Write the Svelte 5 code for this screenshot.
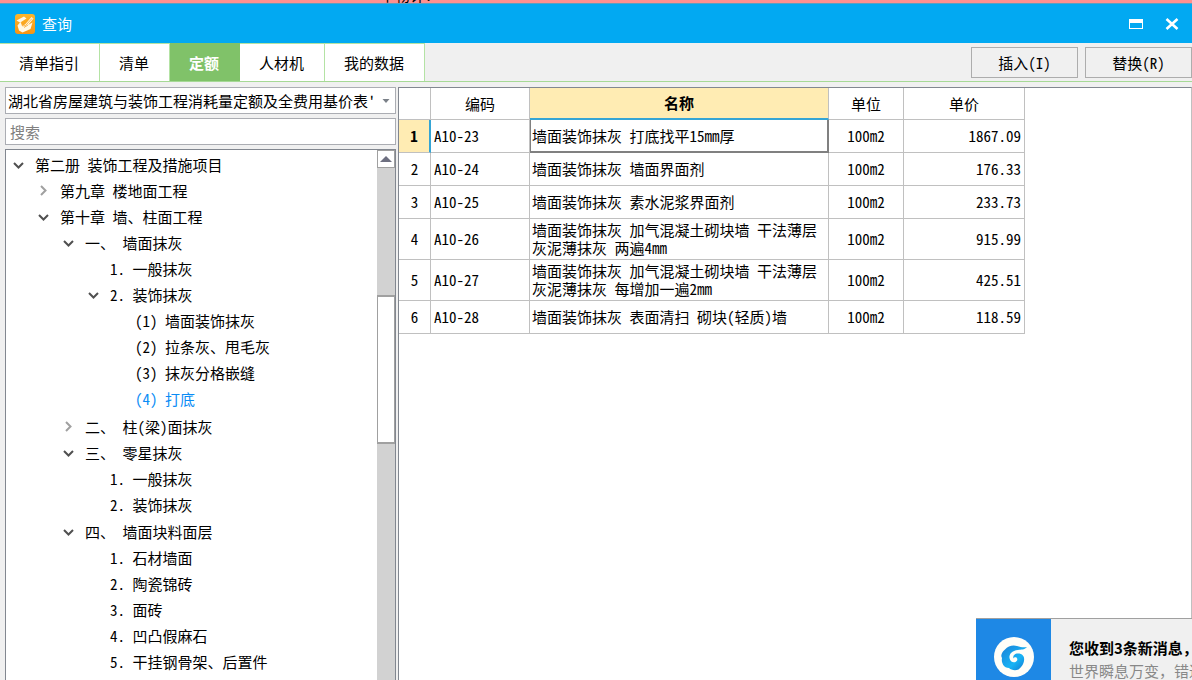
<script>
  let search = $state('')
  let activeTab = $state('定额')
  let library = $state('hubei')

  const tabs = ['清单指引', '清单', '定额', '人材机', '我的数据']

  let tree = $state([
    {
      label: '第二册 装饰工程及措施项目',
      open: true,
      children: [
        { label: '第九章 楼地面工程', open: false, children: [] },
        {
          label: '第十章 墙、柱面工程',
          open: true,
          children: [
            {
              label: '一、 墙面抹灰',
              open: true,
              children: [
                { label: '1. 一般抹灰' },
                {
                  label: '2. 装饰抹灰',
                  open: true,
                  children: [
                    { label: '(1) 墙面装饰抹灰' },
                    { label: '(2) 拉条灰、甩毛灰' },
                    { label: '(3) 抹灰分格嵌缝' },
                    { label: '(4) 打底' }
                  ]
                }
              ]
            },
            { label: '二、 柱(梁)面抹灰', open: false, children: [] },
            {
              label: '三、 零星抹灰',
              open: true,
              children: [{ label: '1. 一般抹灰' }, { label: '2. 装饰抹灰' }]
            },
            {
              label: '四、 墙面块料面层',
              open: true,
              children: [
                { label: '1. 石材墙面' },
                { label: '2. 陶瓷锦砖' },
                { label: '3. 面砖' },
                { label: '4. 凹凸假麻石' },
                { label: '5. 干挂钢骨架、后置件' }
              ]
            }
          ]
        }
      ]
    }
  ])
  let selected = $state('(4) 打底')

  const rows = [
    { code: 'A10-23', name: '墙面装饰抹灰 打底找平15mm厚', unit: '100m2', price: '1867.09' },
    { code: 'A10-24', name: '墙面装饰抹灰 墙面界面剂', unit: '100m2', price: '176.33' },
    { code: 'A10-25', name: '墙面装饰抹灰 素水泥浆界面剂', unit: '100m2', price: '233.73' },
    { code: 'A10-26', name: '墙面装饰抹灰 加气混凝土砌块墙 干法薄层灰泥薄抹灰 两遍4mm', unit: '100m2', price: '915.99' },
    { code: 'A10-27', name: '墙面装饰抹灰 加气混凝土砌块墙 干法薄层灰泥薄抹灰 每增加一遍2mm', unit: '100m2', price: '425.51' },
    { code: 'A10-28', name: '墙面装饰抹灰 表面清扫 砌块(轻质)墙', unit: '100m2', price: '118.59' }
  ]
  let current = $state(0)
</script>

{#snippet branch(nodes)}
  <ul>
    {#each nodes as node}
      <li>
        <div class="node">
          {#if node.children}
            <button
              class="toggle"
              class:open={node.open}
              aria-label="展开或折叠"
              onclick={() => (node.open = !node.open)}
            >
              <svg width="14" height="14" viewBox="0 0 14 14">
                <path d="M5 2 9.5 6.5 5 11" />
              </svg>
            </button>
          {:else}
            <span class="toggle"></span>
          {/if}
          <button
            class="label"
            class:selected={node.label === selected}
            onclick={() => (selected = node.label)}>{node.label}</button>
        </div>
        {#if node.open && node.children.length}
          {@render branch(node.children)}
        {/if}
      </li>
    {/each}
  </ul>
{/snippet}

<div class="window">
  <div class="backdrop"><span>单物计?</span></div>

  <header>
    <svg class="logo" width="20" height="20" viewBox="0 0 20 20">
      <defs>
        <linearGradient id="orange" x1="0" y1="0" x2="0" y2="1">
          <stop offset="0" stop-color="#fdb62a" />
          <stop offset="1" stop-color="#f79413" />
        </linearGradient>
      </defs>
      <rect width="20" height="20" rx="3" fill="url(#orange)" />
      <path
        d="M1.5 6.5 9 2.5 11.5 4.5 6 8 7.5 11.5 10 10.5 16.5 3 18.5 4.5 13 11 17.5 8.5 15.5 15 7.5 18.5 4 16.5 2.5 11.5 5 8.5Z"
        fill="#fff8e6"
      />
      <path d="M6 8 7.5 12 10.5 11.5 17 4.5M13 11 9 13.5" fill="none" stroke="#f9a324" stroke-width="0.8" />
    </svg>
    <h1>查询</h1>
    <button class="win" aria-label="最大化">
      <svg width="14" height="10" viewBox="0 0 14 10">
        <path d="M0 0H14V10H0ZM1 4V9H13V4Z" fill="#fff" fill-rule="evenodd" />
      </svg>
    </button>
    <button class="win" aria-label="关闭">
      <svg width="14" height="12" viewBox="0 0 14 12">
        <path d="M1.5 1 12.5 11M12.5 1 1.5 11" stroke="#fff" stroke-width="2.6" />
      </svg>
    </button>
  </header>

  <div class="toolbar">
    <nav>
      {#each tabs as tab}
        <button class="tab" class:active={tab === activeTab} onclick={() => (activeTab = tab)}>{tab}</button>
      {/each}
    </nav>
    <div class="actions">
      <button>插入(I)</button>
      <button>替换(R)</button>
    </div>
  </div>

  <main>
    <aside>
      <div class="combo">
        <select bind:value={library} aria-label="定额库">
          <option value="hubei">湖北省房屋建筑与装饰工程消耗量定额及全费用基价表'</option>
        </select>
        <svg width="8" height="4" viewBox="0 0 8 4"><path d="M0.5 0H7.5L4 4Z" /></svg>
      </div>
      <input class="search" bind:value={search} placeholder="搜索" aria-label="搜索" />
      <div class="tree">
        <div class="nodes">{@render branch(tree)}</div>
        <div class="scroll">
          <button class="up" aria-label="向上滚动">
            <svg width="12" height="6" viewBox="0 0 12 6"><path d="M0 6 6 0 12 6Z" /></svg>
          </button>
          <div class="before"></div>
          <div class="thumb"></div>
        </div>
      </div>
    </aside>

    <section>
      <table>
        <colgroup>
          <col class="c-no" />
          <col class="c-code" />
          <col class="c-name" />
          <col class="c-unit" />
          <col class="c-price" />
        </colgroup>
        <thead>
          <tr>
            <th></th>
            <th>编码</th>
            <th class="picked">名称</th>
            <th>单位</th>
            <th>单价</th>
          </tr>
        </thead>
        <tbody>
          {#each rows as row, i}
            <tr class:current={i === current} onclick={() => (current = i)}>
              <th scope="row">{i + 1}</th>
              <td>{row.code}</td>
              <td class="name">{row.name}</td>
              <td class="unit">{row.unit}</td>
              <td class="price">{row.price}</td>
            </tr>
          {/each}
        </tbody>
      </table>
    </section>
  </main>

  <div class="toast" role="status">
    <div class="brand">
      <svg width="40" height="40" viewBox="0 0 40 40">
        <defs>
          <linearGradient id="wave" x1="0" y1="0" x2="1" y2="1">
            <stop offset="0" stop-color="#1b7fd6" />
            <stop offset="0.6" stop-color="#18b4f5" />
            <stop offset="1" stop-color="#1272cc" />
          </linearGradient>
        </defs>
        <circle cx="20" cy="20" r="20" fill="#fffef8" />
        <path
          d="M33 10C30 13 27 12.500 24 13C18 13.500 15 17 15.500 21C16 24.500 19 26 21.500 25C23.500 24 24 22 22.500 20.500C21 20 20 20.500 19.500 21.500C18.500 18.500 21 16.500 24 16.500C28 16.500 31 19 30 24C29 29 26 31 24.500 32.500C21 34 17 33 15 31C10 31 7 26 8 21C6 18 9 14 11 12.500C14 9 19 7.500 23 9C27 10.500 30 10.500 33 10Z"
          fill="url(#wave)"
        />
      </svg>
    </div>
    <div class="message">
      <strong>您收到3条新消息，</strong>
      <p>世界瞬息万变，错过</p>
    </div>
  </div>
</div>

<style>
  :global(body) {
    margin: 0;
    background: #f0f0f0;
  }
  .window {
    display: flex;
    flex-direction: column;
    height: 100vh;
    overflow: hidden;
    color: #000;
    font: 15px/18px "Noto Sans CJK SC", sans-serif;
    font-feature-settings: "hwid";
  }
  button,
  input,
  select {
    box-sizing: border-box;
    margin: 0;
    padding: 0;
    border: 0;
    background: none;
    color: inherit;
    font: inherit;
    font-feature-settings: inherit;
  }
  svg {
    display: block;
  }

  .backdrop {
    display: flex;
    flex: none;
    align-items: flex-end;
    height: 3px;
    padding-left: 380px;
    overflow: hidden;
    background: #ff9090;
    border-bottom: 1px solid #5c9fc0;
    line-height: 16px;
  }

  header {
    display: flex;
    flex: none;
    align-items: center;
    height: 39px;
    padding: 0 13px 0 15px;
    background: #02a9f2;
    color: #fff;
  }
  h1 {
    flex: 1;
    margin: 0 0 0 7px;
    font-size: 15px;
    font-weight: 400;
  }
  .win {
    margin-left: 22px;
  }

  .toolbar {
    display: flex;
    flex: none;
    justify-content: space-between;
    height: 38px;
    border-bottom: 1px solid #a6d996;
  }
  nav {
    display: flex;
  }
  .tab {
    padding: 0 20px 0 19px;
    border-top: 1px solid #b4e3a4;
    border-right: 1px solid #b4e3a4;
    background: #fff;
  }
  .tab.active {
    border-color: #80c269;
    background: #80c269;
    color: #fff;
    font-weight: 700;
  }
  .actions {
    display: flex;
    gap: 7px;
    padding: 4px 0 3px;
  }
  .actions button {
    width: 107px;
    border: 1px solid #adadad;
  }

  main {
    display: flex;
    flex: 1;
    gap: 2px;
    min-height: 0;
    padding: 5px 0 0 5px;
  }
  aside {
    display: flex;
    flex: none;
    flex-direction: column;
    gap: 4px;
    width: 391px;
  }
  .combo {
    position: relative;
    flex: none;
    height: 27px;
  }
  select {
    width: 100%;
    height: 27px;
    padding: 0 20px 0 2px;
    appearance: none;
    overflow: hidden;
    background: #fff;
    border: 1px solid #abadb3;
  }
  .combo svg {
    position: absolute;
    top: 12px;
    right: 6px;
    fill: #7a8088;
    pointer-events: none;
  }
  .search {
    flex: none;
    width: 100%;
    height: 27px;
    padding: 0 4px;
    background: #fff;
    border: 1px solid #abadb3;
  }
  .search::placeholder {
    color: #808080;
    opacity: 1;
  }
  .tree {
    display: flex;
    flex: 1;
    min-height: 0;
    background: #fff;
    border: 1px solid #828790;
    border-bottom: 0;
  }
  .nodes {
    flex: 1;
    padding: 2px 0 0 5px;
    overflow: hidden;
  }
  ul {
    margin: 0;
    padding: 0;
    list-style: none;
  }
  ul ul {
    padding: 0 0 1px 25px;
  }
  .node {
    display: flex;
    align-items: center;
    height: 26px;
  }
  .toggle {
    flex: none;
    width: 14px;
    margin-right: 10px;
  }
  .toggle path {
    fill: none;
    stroke: #a0a0a0;
    stroke-width: 2;
  }
  .toggle.open path {
    stroke: #505050;
  }
  .toggle.open svg {
    transform: rotate(90deg);
  }
  .label {
    white-space: nowrap;
  }
  .label.selected {
    color: #0a8cf5;
  }
  .scroll {
    display: flex;
    flex: none;
    flex-direction: column;
    width: 18px;
    background: #d2d2d2;
  }
  .up {
    display: grid;
    flex: none;
    place-items: center;
    height: 18px;
    background: #fff;
    border: 1px solid #a0a0a0;
  }
  .up path {
    fill: #6d6f80;
  }
  .before {
    flex: 0 0 24%;
  }
  .thumb {
    box-sizing: border-box;
    flex: 0 0 28%;
    background: #fff;
    border: 1px solid #a0a0a0;
    border-width: 2px 1px;
  }

  section {
    flex: 1;
    overflow: hidden;
    background: #fff;
    border: 1px solid #828790;
    border-right-color: #c0c0c0;
    border-bottom: 0;
  }
  table {
    width: 626px;
    table-layout: fixed;
    border-collapse: separate;
    border-spacing: 0;
  }
  .c-no {
    width: 32px;
  }
  .c-code {
    width: 99px;
  }
  .c-name {
    width: 299px;
  }
  .c-unit {
    width: 75px;
  }
  .c-price {
    width: 121px;
  }
  th,
  td {
    box-sizing: border-box;
    height: 33px;
    padding: 2px 3px;
    border-right: 1px solid #c0c0c0;
    border-bottom: 1px solid #c0c0c0;
    font-weight: 400;
  }
  thead th {
    height: 32px;
  }
  .name {
    padding: 2px;
  }
  .picked {
    background: #ffecb3;
    border-bottom: 2px solid #35a5d5;
    font-weight: 700;
  }
  .current th {
    background: #ffecb3;
    border-right: 2px solid #35a5d5;
    font-weight: 700;
  }
  /* the blue header line stays visible above the focused cell */
  .current .name {
    box-shadow: inset 1px 0 #808080, inset -1px -1px #808080;
    border-right-color: #808080;
    border-bottom-color: #808080;
  }
  .unit {
    text-align: center;
  }
  .price {
    text-align: right;
  }

  .toast {
    position: fixed;
    right: 0;
    bottom: 0;
    display: flex;
    width: 216px;
    height: 61px;
    overflow: hidden;
    background: #f0f0f0;
    border-top: 1px solid #a0a0a0;
    white-space: nowrap;
    font-feature-settings: normal;
  }
  .brand {
    flex: none;
    padding: 18px 17px 0 18px;
    background: #1e88e5;
  }
  .message {
    padding: 17px 0 0 18px;
    line-height: 23px;
  }
  .message strong {
    display: block;
  }
  .message p {
    margin: 0;
    color: #888;
  }
</style>
